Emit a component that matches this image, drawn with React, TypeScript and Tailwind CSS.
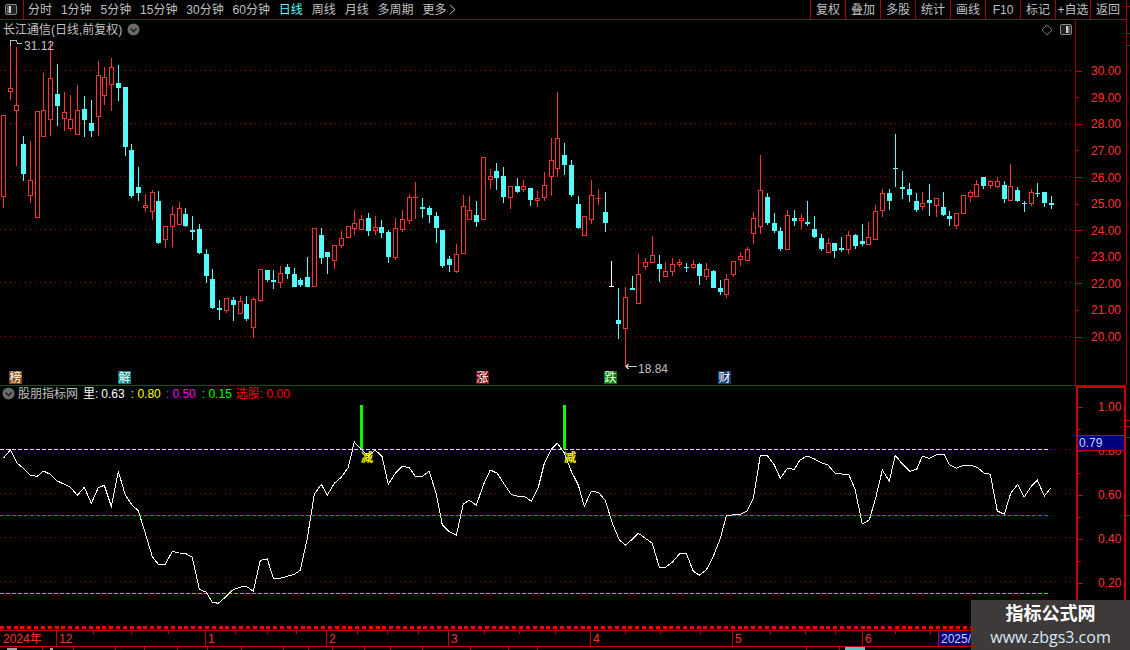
import React from 'react';

type Kind = 'r' | 'c' | 'w';
// x, high, body top, body bottom, low, colour
type Candle = [number, number, number, number, number, Kind];

const CANDLES: Candle[] = [
  [3, 115, 115, 197, 208, 'r'], [10, 40, 88, 92, 100, 'r'], [16, 47, 105, 111, 166, 'r'], [23, 136, 144, 174, 181, 'c'],
  [30, 141, 180, 196, 203, 'r'], [37, 111, 111, 218, 218, 'r'], [43, 73, 110, 137, 137, 'r'], [50, 42, 78, 120, 136, 'r'],
  [57, 64, 94, 106, 126, 'c'], [64, 92, 112, 119, 131, 'r'], [70, 95, 119, 129, 131, 'r'], [77, 85, 110, 135, 135, 'r'],
  [84, 96, 109, 120, 137, 'c'], [91, 100, 123, 131, 137, 'c'], [98, 61, 75, 117, 136, 'r'], [104, 67, 77, 96, 105, 'r'],
  [111, 58, 67, 85, 111, 'r'], [118, 65, 83, 88, 101, 'c'], [125, 87, 87, 147, 156, 'c'], [131, 144, 150, 196, 198, 'c'],
  [138, 167, 187, 193, 201, 'c'], [145, 194, 205, 208, 212, 'r'], [152, 190, 192, 212, 220, 'r'], [158, 191, 201, 243, 244, 'c'],
  [165, 226, 226, 240, 248, 'r'], [172, 206, 214, 227, 247, 'r'], [179, 202, 208, 225, 225, 'r'], [185, 208, 214, 226, 227, 'c'],
  [192, 216, 230, 232, 240, 'c'], [199, 224, 229, 253, 254, 'c'], [206, 249, 254, 276, 283, 'c'], [212, 269, 279, 308, 309, 'c'],
  [219, 300, 308, 310, 320, 'c'], [226, 298, 298, 311, 313, 'r'], [233, 297, 300, 305, 321, 'c'], [240, 296, 301, 314, 314, 'r'],
  [246, 296, 304, 319, 321, 'c'], [253, 297, 299, 328, 338, 'r'], [260, 269, 269, 301, 302, 'r'], [267, 270, 270, 280, 282, 'c'],
  [273, 270, 280, 282, 289, 'c'], [280, 266, 273, 283, 288, 'r'], [287, 264, 267, 274, 279, 'c'], [294, 268, 274, 287, 287, 'c'],
  [300, 278, 280, 285, 287, 'c'], [307, 257, 277, 287, 287, 'c'], [314, 228, 228, 287, 287, 'r'], [321, 228, 235, 258, 264, 'c'],
  [327, 252, 252, 257, 274, 'c'], [334, 245, 245, 261, 269, 'r'], [341, 231, 238, 246, 248, 'r'], [348, 226, 226, 238, 238, 'r'],
  [354, 210, 223, 229, 235, 'r'], [361, 215, 219, 230, 230, 'r'], [368, 213, 218, 231, 236, 'c'], [375, 216, 227, 231, 235, 'r'],
  [381, 220, 227, 233, 238, 'c'], [388, 230, 232, 257, 263, 'c'], [395, 218, 228, 258, 260, 'r'], [402, 210, 219, 230, 232, 'r'],
  [409, 194, 197, 221, 224, 'r'], [415, 182, 197, 198, 219, 'r'], [422, 198, 207, 209, 218, 'c'], [429, 206, 208, 215, 223, 'c'],
  [436, 212, 216, 228, 243, 'c'], [442, 230, 230, 266, 268, 'c'], [449, 256, 259, 265, 272, 'c'], [456, 244, 254, 272, 273, 'r'],
  [463, 195, 206, 254, 254, 'r'], [469, 196, 210, 220, 220, 'r'], [476, 201, 215, 222, 227, 'c'], [483, 157, 157, 220, 220, 'r'],
  [490, 169, 176, 180, 189, 'r'], [496, 163, 171, 178, 190, 'c'], [503, 167, 176, 197, 203, 'c'], [510, 186, 186, 198, 209, 'r'],
  [517, 178, 186, 192, 193, 'c'], [523, 180, 186, 190, 192, 'r'], [530, 188, 188, 200, 206, 'c'], [537, 191, 198, 201, 207, 'r'],
  [544, 172, 185, 198, 201, 'r'], [551, 138, 160, 177, 196, 'r'], [557, 92, 138, 169, 177, 'r'], [564, 143, 155, 165, 175, 'c'],
  [571, 160, 165, 195, 197, 'c'], [578, 196, 204, 228, 229, 'c'], [584, 216, 216, 236, 236, 'r'], [591, 180, 195, 220, 224, 'r'],
  [598, 189, 198, 199, 205, 'r'], [605, 192, 212, 223, 232, 'c'], [611, 261, 286, 287, 287, 'w'], [618, 288, 320, 324, 339, 'c'],
  [625, 287, 297, 329, 367, 'r'], [632, 276, 288, 290, 290, 'c'], [638, 254, 274, 304, 304, 'r'], [645, 258, 262, 267, 270, 'r'],
  [652, 236, 255, 263, 263, 'r'], [659, 255, 264, 269, 282, 'c'], [665, 262, 271, 277, 277, 'r'], [672, 258, 264, 272, 276, 'r'],
  [679, 259, 262, 265, 267, 'r'], [686, 263, 267, 268, 272, 'c'], [693, 260, 264, 268, 269, 'r'], [699, 263, 264, 276, 285, 'c'],
  [706, 263, 269, 277, 280, 'r'], [713, 270, 271, 288, 288, 'c'], [720, 280, 288, 292, 295, 'c'], [726, 274, 279, 295, 298, 'r'],
  [733, 261, 261, 275, 277, 'r'], [740, 252, 256, 260, 266, 'r'], [747, 247, 249, 261, 261, 'r'], [753, 212, 218, 234, 244, 'r'],
  [760, 155, 190, 227, 234, 'r'], [767, 193, 197, 223, 225, 'c'], [774, 213, 223, 231, 233, 'c'], [780, 227, 231, 249, 251, 'c'],
  [787, 210, 215, 250, 250, 'r'], [794, 210, 218, 221, 226, 'c'], [801, 214, 218, 221, 229, 'r'], [807, 201, 222, 224, 226, 'c'],
  [814, 216, 229, 237, 238, 'c'], [821, 234, 238, 249, 251, 'c'], [828, 238, 243, 253, 253, 'r'], [834, 243, 243, 251, 258, 'c'],
  [841, 237, 248, 250, 252, 'c'], [848, 231, 235, 250, 254, 'r'], [855, 234, 235, 246, 249, 'c'], [862, 224, 241, 244, 246, 'c'],
  [868, 222, 237, 245, 245, 'r'], [875, 205, 211, 240, 240, 'r'], [882, 189, 193, 211, 217, 'r'], [889, 189, 193, 201, 210, 'c'],
  [895, 134, 168, 169, 187, 'c'], [902, 171, 187, 189, 199, 'c'], [909, 183, 189, 195, 202, 'c'], [916, 193, 201, 210, 212, 'c'],
  [922, 192, 203, 207, 210, 'r'], [929, 184, 200, 203, 216, 'c'], [936, 198, 198, 206, 217, 'r'], [943, 192, 207, 215, 216, 'c'],
  [949, 211, 216, 219, 226, 'c'], [956, 213, 213, 226, 229, 'r'], [963, 195, 195, 214, 214, 'r'], [970, 190, 192, 197, 202, 'r'],
  [976, 180, 184, 197, 197, 'r'], [983, 177, 177, 186, 189, 'c'], [990, 180, 181, 186, 189, 'r'], [997, 177, 181, 187, 188, 'r'],
  [1004, 181, 185, 199, 203, 'c'], [1010, 164, 186, 201, 201, 'r'], [1017, 187, 190, 201, 202, 'c'], [1024, 201, 203, 204, 212, 'c'],
  [1031, 189, 192, 204, 206, 'r'], [1037, 183, 193, 194, 197, 'c'], [1044, 192, 192, 203, 207, 'c'], [1051, 196, 203, 205, 209, 'c'],
];

// traced from the chart, three stretches at 3x
const LINE_A = [[10, 70], [31, 45], [52, 85], [70, 100], [91, 121], [112, 124], [130, 108], [151, 118], [172, 138], [193, 148], [211, 156], [232, 181], [253, 157], [274, 205], [295, 158], [313, 151], [334, 214], [355, 109], [376, 180], [397, 211], [415, 227], [436, 295], [457, 365], [475, 388], [496, 388], [517, 349], [538, 354], [556, 355], [577, 367], [598, 463], [619, 472], [637, 502], [655, 505], [676, 487], [697, 466], [718, 457], [739, 454], [760, 469], [781, 376], [802, 372], [820, 430], [841, 430], [862, 424], [883, 418], [901, 406], [922, 310], [943, 178], [964, 148], [982, 181], [1003, 145], [1024, 127], [1045, 97], [1063, 21], [1084, 43], [1105, 64]];
const LINE_B = [[15, 45], [36, 64], [55, 148], [76, 115], [97, 94], [118, 98], [136, 124], [157, 124], [178, 109], [199, 178], [217, 270], [238, 290], [259, 301], [280, 207], [298, 196], [319, 211], [340, 150], [361, 105], [382, 115], [403, 148], [424, 179], [445, 184], [463, 184], [484, 199], [505, 157], [523, 85], [544, 43], [562, 25], [583, 54], [604, 109], [625, 150], [643, 214], [664, 169], [685, 172], [706, 196], [727, 265], [748, 314], [766, 331], [787, 313], [805, 295], [826, 310], [847, 325], [868, 397], [886, 397], [907, 382], [928, 357], [949, 355], [970, 409], [988, 421], [1009, 405], [1030, 364], [1051, 310], [1069, 243], [1090, 239], [1111, 238], [1132, 227], [1150, 190], [1171, 62], [1192, 62], [1213, 90], [1231, 130], [1252, 100], [1273, 103]];
const LINE_C = [[0, 240], [21, 228], [42, 236], [63, 248], [84, 255], [105, 280], [126, 282], [147, 285], [165, 328], [187, 432], [208, 420], [228, 350], [247, 270], [268, 303], [286, 226], [307, 252], [330, 274], [350, 268], [367, 228], [388, 235], [409, 224], [432, 223], [448, 254], [469, 265], [490, 256], [511, 256], [532, 262], [553, 280], [571, 283], [592, 393], [613, 403], [632, 340], [653, 313], [672, 352], [693, 320], [712, 300], [733, 348], [752, 325]];

const toPx = (pts: number[][], ox: number, oy: number) =>
  pts.map(([x, y]) => `${(ox + x / 3).toFixed(1)},${(oy + y / 3).toFixed(1)}`).join(' ');

const LINE = [toPx(LINE_A, 0, 435), toPx(LINE_B, 370, 435), toPx(LINE_C, 800, 380)].join(' ');

const TABS = ['分时', '1分钟', '5分钟', '15分钟', '30分钟', '60分钟', '日线', '周线', '月线', '多周期', '更多'];
const ACTIONS = ['复权', '叠加', '多股', '统计', '画线', 'F10', '标记', '+自选', '返回'];
const PRICES = ['30.00', '', '29.00', '', '28.00', '', '27.00', '', '26.00', '', '25.00', '', '24.00', '', '23.00', '', '22.00', '', '21.00', '', '20.00'];
const RATIOS = ['1.00', '', '0.80', '', '0.60', '', '0.40', '', '0.20'];
const MONTHS = [
  { label: '12', w: 'w-[149px]' },
  { label: '1', w: 'w-[121px]' },
  { label: '2', w: 'w-[122px]' },
  { label: '3', w: 'w-[142px]' },
  { label: '4', w: 'w-[142px]' },
  { label: '5', w: 'w-[130px]' },
  { label: '6', w: 'w-[76px]' },
];
const TIME_TICKS = [93, 131, 168, 235, 267, 296, 357, 387, 418, 484, 519, 555, 625, 660, 700, 770, 805, 835, 895, 930, 1010, 1060];
const LOW_TICKS = [42, 73, 115, 144, 177, 207, 241, 283, 308, 332, 364, 390, 422, 470, 508, 537, 806, 839];
const BADGES = [
  { text: '榜', cls: 'left-[9px] bg-[#8b4a14]' },
  { text: '解', cls: 'left-[118px] bg-[#008080]' },
  { text: '涨', cls: 'left-[476px] bg-[#7a1010]' },
  { text: '跌', cls: 'left-[604px] bg-[#008000]' },
  { text: '财', cls: 'left-[718px] bg-[#103c70]' },
];

const COLORS: Record<Kind, string> = { r: '#ff3232', c: '#54fcfc', w: '#ffffff' };

const CandleMark = ({ c }: { c: Candle }) => {
  const [x, high, top, bottom, low, kind] = c;
  const color = COLORS[kind];
  return (
    <g>
      {high < top && <rect x={x} y={high} width={1} height={top - high} fill={color} />}
      {low > bottom && <rect x={x} y={bottom} width={1} height={low - bottom} fill={color} />}
      {kind === 'r' && bottom - top > 2 ? (
        <rect x={x - 1.5} y={top + 0.5} width={4} height={bottom - top - 1} fill="#000" stroke={color} />
      ) : (
        <rect x={x - 2} y={top} width={5} height={bottom - top} fill={color} />
      )}
    </g>
  );
};

const Chevron = () => (
  <svg width="13" height="13" viewBox="0 0 13 13" className="block shrink-0">
    <circle cx="6.5" cy="6.5" r="6" fill="#6a6a6a" />
    <path d="M3.5 5.5 L6.5 8.5 L9.5 5.5" fill="none" stroke="#1c1c1c" strokeWidth="1.4" />
  </svg>
);

const PanelIcon = ({ flip }: { flip?: boolean }) => (
  <svg width="12" height="11" viewBox="0 0 12 11" className="block">
    <rect x="0.5" y="0.5" width="11" height="10" rx="1.5" fill="#222" stroke="#8a8a8a" />
    {flip ? (
      <>
        <rect x="6" y="2" width="4" height="7" fill="#666" />
        <rect x="6" y="2" width="2" height="7" fill="#d0d0d0" />
      </>
    ) : (
      <>
        <rect x="2" y="2" width="4" height="7" fill="#666" />
        <rect x="4" y="2" width="2" height="7" fill="#d0d0d0" />
      </>
    )}
  </svg>
);

const PriceChart = () => (
  <svg width="1075" height="365" viewBox="0 20 1075 365" shapeRendering="crispEdges" className="block">
    {[70.5, 123.5, 176.5, 229.5, 282.5, 336.5].map(y => (
      <line key={y} x1="0" x2="1075" y1={y} y2={y} stroke="#a00000" strokeDasharray="1 4" />
    ))}
    {CANDLES.map(c => <CandleMark key={c[0]} c={c} />)}
    {/* high / low markers */}
    <path d="M10.5 40 V46 M10 40.5 H16 L18 43.5 H22" fill="none" stroke="#c0c0c0" />
    <path d="M625 366.5 H637 M625 366.5 L629 364 M625 366.5 L629 369" fill="none" stroke="#c0c0c0" />
  </svg>
);

const RatioChart = () => (
  <svg width="1076" height="244" viewBox="0 386 1076 244" shapeRendering="crispEdges" className="block">
    {[493.5, 537.5, 581.5].map(y => (
      <line key={y} x1="0" x2="1076" y1={y} y2={y} stroke="#8a0000" strokeDasharray="1 4" />
    ))}
    <line x1="1050" x2="1076" y1="449.5" y2="449.5" stroke="#8a0000" strokeDasharray="1 4" />
    <line x1="0" x2="1050" y1="449.5" y2="449.5" stroke="#ffff00" strokeDasharray="4 2" />
    <line x1="0" x2="1050" y1="515.5" y2="515.5" stroke="#ff00ff" strokeDasharray="4 2" />
    <line x1="0" x2="1050" y1="593.5" y2="593.5" stroke="#00ff00" strokeDasharray="4 2" />
    <rect x="360" y="405" width="3" height="44" fill="#00ff00" />
    <rect x="563" y="405" width="3" height="44" fill="#00ff00" />
    <polyline points={LINE} fill="none" stroke="#ffffff" />
    <text x="361" y="462" fontSize="12" fill="#ffff00" stroke="#ffff00" strokeWidth="0.3">减</text>
    <text x="564" y="462" fontSize="12" fill="#ffff00" stroke="#ffff00" strokeWidth="0.3">减</text>
    <line x1="0" x2="1076" y1="627" y2="627" stroke="#ff0000" strokeWidth="3" strokeDasharray="4 2.83" />
  </svg>
);

export default function App() {
  return (
    <div className="relative flex w-[1130px] h-[650px] overflow-hidden bg-black text-[12px] leading-none text-[#c0c0c0] font-['Liberation_Sans','Noto_Sans_CJK_SC',sans-serif]">
      <div className="flex flex-col w-[1126px] shrink-0">
        {/* Toolbar */}
        <div className="flex items-center h-[20px] border-b border-[#a80000] shrink-0">
          <div className="flex items-center justify-center w-[24px] h-full border-r border-[#a80000] pr-[1px] pb-[1px]">
            <PanelIcon />
          </div>
          <div className="flex items-center gap-[8.9px] ml-[4px]">
            {TABS.map(t => (
              <span key={t} className={t === '日线' ? 'text-[#54fcfc]' : ''}>{t}</span>
            ))}
            <svg width="7" height="11" viewBox="0 0 7 11" className="block -ml-[6px]">
              <path d="M1 1 L6 5.5 L1 10" fill="none" stroke="#c0c0c0" />
            </svg>
          </div>
          <div className="flex h-full ml-auto">
            {ACTIONS.map(a => (
              <div key={a} className="flex items-center justify-center w-[35px] border-l border-[#a80000]">{a}</div>
            ))}
            <div className="w-px" />
          </div>
        </div>

        {/* Price panel */}
        <div className="flex h-[366px] border-b border-[#a00000] shrink-0">
          <div className="relative w-[1075px] shrink-0">
            <PriceChart />
            <div className="absolute left-[3px] top-[3px] flex items-center gap-[5px]">
              <span>长江通信(日线,前复权)</span>
              <Chevron />
            </div>
            <span className="absolute left-[24px] top-[20px]">31.12</span>
            <span className="absolute left-[638px] top-[343px]">18.84</span>
            <svg width="12" height="12" viewBox="0 0 12 12" className="absolute left-[1041px] top-[4px]">
              <path d="M6 1 L11 6 L6 11 L1 6 Z" fill="none" stroke="#7a7a7a" />
            </svg>
            <div className="absolute left-[1060px] top-[4px]"><PanelIcon flip /></div>
            {BADGES.map(b => (
              <span key={b.text} className={`absolute top-[351px] flex items-center justify-center w-[13px] h-[13px] text-white ${b.cls}`}>
                {b.text}
              </span>
            ))}
          </div>
          <div className="flex-1 flex flex-col pt-[44.5px] border-l border-[#a80000]">
            {PRICES.map((p, i) => (
              <div key={i} className="flex items-center h-[13.3px] shrink-0">
                {p ? (
                  <>
                    <div className={`h-px bg-[#c00000] ${i % 4 === 0 ? 'w-[6px]' : 'w-[3px]'}`} />
                    <span className={`text-[#ff3232] ${i % 4 === 0 ? 'ml-[9px]' : 'ml-[12px]'}`}>{p}</span>
                  </>
                ) : null}
              </div>
            ))}
          </div>
        </div>

        {/* Indicator panel */}
        <div className="flex h-[244px] shrink-0">
          <div className="relative w-[1076px] shrink-0">
            <RatioChart />
            <div className="absolute left-[2px] top-[1px] flex items-center">
              <Chevron />
              <span className="ml-[3px]">股朋指标网</span>
              <span className="ml-[5px] text-white">里:</span>
              <span className="ml-[3px] text-white">0.63</span>
              <span className="ml-[6px] text-[#ffff00]">: 0.80</span>
              <span className="ml-[5px] text-[#ff00ff]">: 0.50</span>
              <span className="ml-[6px] text-[#00ff00]">: 0.15</span>
              <span className="ml-[4px] text-[#ff0000]">选股: 0.00</span>
            </div>
          </div>
          <div className="relative flex-1 flex flex-col pt-[8px] border-2 border-b-0 border-[#c80000]">
            {RATIOS.map((r, i) => (
              <div key={i} className="flex items-center h-[22px] shrink-0">
                {r ? (
                  <>
                    <div className="w-[5px] h-px bg-[#c00000]" />
                    <span className="ml-[15px] text-[#ff3232]">{r}</span>
                  </>
                ) : (
                  <div className="w-[3px] h-px bg-[#c00000]" />
                )}
              </div>
            ))}
            <div className="absolute left-0 right-0 top-[47px] flex items-center h-[16px] pl-[1px] bg-[#00007f] border-y border-[#c80000] text-[#c8d0ff]">
              0.79
            </div>
          </div>
        </div>

        {/* Time axis */}
        <div className="relative flex h-[17px] border-y border-[#c80000] shrink-0 text-[#ff3232]">
          <div className="flex items-center w-[56px] pl-[3px]">2024年</div>
          {MONTHS.map(m => (
            <div key={m.label} className={`flex items-center pl-[2px] border-l border-[#c80000] ${m.w}`}>{m.label}</div>
          ))}
          <div className="flex items-center flex-1 pl-[2px] border-l border-[#c80000] bg-[#00007f] text-[#c8d0ff]">2025/</div>
          <svg width="1126" height="4" className="absolute left-0 top-0" shapeRendering="crispEdges">
            {TIME_TICKS.map(x => <rect key={x} x={x} y="0" width="1" height="3" fill="#c80000" />)}
          </svg>
        </div>

        {/* Cut-off row under the axis */}
        <svg width="1126" height="3" className="block shrink-0" shapeRendering="crispEdges">
          <rect x="7" y="1" width="10" height="2" fill="#a0a0a0" />
          <rect x="50" y="1" width="3" height="2" fill="#a0a0a0" />
          <rect x="845" y="0" width="20" height="3" fill="#54c8c8" />
          {LOW_TICKS.map(x => <rect key={x} x={x} y="0" width="1" height="3" fill="#c80000" />)}
        </svg>
      </div>

      {/* Right rail */}
      <svg width="4" height="650" className="block shrink-0" shapeRendering="crispEdges">
        <rect x="0" y="0" width="1" height="385" fill="#a80000" />
        {[6, 33, 45, 420, 426, 437, 515].map(y => <rect key={y} x="0" y={y} width="4" height="1" fill="#a80000" />)}
      </svg>

      {/* Watermark */}
      <div className="absolute right-0 bottom-0 flex flex-col items-center justify-center w-[159px] h-[50px] bg-[#3e3a39]">
        <span className="text-[18px] font-bold text-white">指标公式网</span>
        <span className="mt-[6px] text-[16px] text-[#d6e8f8] font-['Open_Sans',sans-serif]">www.zbgs3.com</span>
      </div>
    </div>
  );
}
